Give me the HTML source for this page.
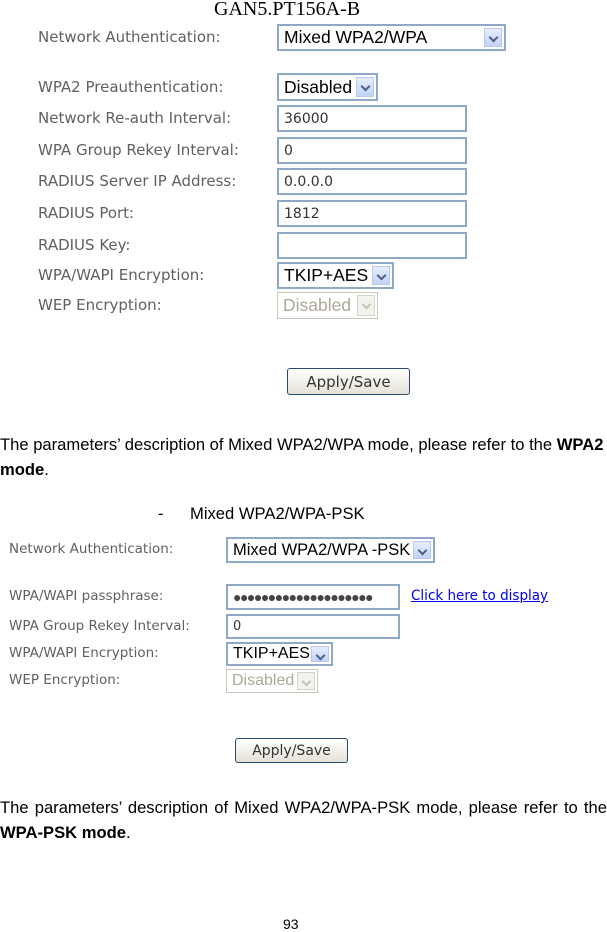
<!DOCTYPE html>
<html><head><meta charset="utf-8"><style>
body{margin:0;width:607px;height:931px;background:#fff;position:relative;overflow:hidden;font-family:"Liberation Sans",Arial,sans-serif}
.a{position:absolute;white-space:nowrap}
.l{position:absolute;white-space:nowrap;color:#606060;font-size:15px;font-family:"DejaVu Sans",sans-serif;transform-origin:0 50%}
.b{position:absolute;box-sizing:border-box;border:1px solid #7f9db9;background:#fff;font-size:17.5px;color:#000;padding-left:5px;display:flex;align-items:center;overflow:hidden}
.box2{border:2px solid #8ea8c6}
.arr{position:absolute;right:2px;top:2px;bottom:2px;width:18px;background:linear-gradient(#e6eeff,#c2d3f7);border:1px solid #b7c8ec;box-sizing:border-box}
.arr:after{content:"";position:absolute;left:5px;top:5px;width:5px;height:5px;border-right:2px solid #4d6185;border-bottom:2px solid #4d6185;transform:rotate(45deg)}
.dis{border-color:#c9c7ba;color:#aca899}
.dis .arr{background:#f3f3ee;border-color:#d6d4c8}
.dis .arr:after{border-color:#c4c2b5}
.btn{position:absolute;box-sizing:border-box;border:1px solid #2c4a6e;border-radius:3px;background:linear-gradient(#fff,#e4e1d8);color:#333;font-family:"DejaVu Sans",sans-serif;display:flex;align-items:center;justify-content:center}
.p{position:absolute;left:0;width:607px;font-size:16.6px;color:#000}
.s2{font-size:16.5px}
</style></head><body>
<div class="a" style="left:214px;top:-2px;font-family:'Liberation Serif',serif;font-size:20px">GAN5.PT156A-B</div>

<div class="l" style="left:38px;top:28px">Network Authentication:</div>
<div class="b box2" style="left:277px;top:24px;width:229px;height:27px">Mixed WPA2/WPA<div class="arr"></div></div>
<div class="l" style="left:38px;top:78px">WPA2 Preauthentication:</div>
<div class="b box2" style="left:277px;top:73px;width:101px;height:28px">Disabled<div class="arr"></div></div>
<div class="l" style="left:38px;top:109px">Network Re-auth Interval:</div>
<div class="b box2" style="left:277px;top:105px;width:190px;height:27px;font-family:'DejaVu Sans';font-size:14px;color:#333">36000</div>
<div class="l" style="left:38px;top:141px">WPA Group Rekey Interval:</div>
<div class="b box2" style="left:277px;top:137px;width:190px;height:27px;font-family:'DejaVu Sans';font-size:14px;color:#333">0</div>
<div class="l" style="left:38px;top:172px">RADIUS Server IP Address:</div>
<div class="b box2" style="left:277px;top:168px;width:190px;height:27px;font-family:'DejaVu Sans';font-size:14px;color:#333">0.0.0.0</div>
<div class="l" style="left:38px;top:204px">RADIUS Port:</div>
<div class="b box2" style="left:277px;top:200px;width:190px;height:27px;font-family:'DejaVu Sans';font-size:14px;color:#333">1812</div>
<div class="l" style="left:38px;top:236px">RADIUS Key:</div>
<div class="b box2" style="left:277px;top:232px;width:190px;height:27px"></div>
<div class="l" style="left:38px;top:266px">WPA/WAPI Encryption:</div>
<div class="b box2" style="left:277px;top:262px;width:117px;height:27px">TKIP+AES<div class="arr"></div></div>
<div class="l" style="left:38px;top:296px">WEP Encryption:</div>
<div class="b dis" style="left:277px;top:292px;width:101px;height:27px">Disabled<div class="arr"></div></div>
<div class="btn" style="left:287px;top:368px;width:123px;height:27px;font-size:15px">Apply/Save</div>

<div class="p" style="top:432px;text-align:justify;line-height:25px">The parameters’ description of Mixed WPA2/WPA mode, please refer to the <b>WPA2</b><br><b>mode</b>.</div>
<div class="a" style="left:158px;top:504px;font-size:16.6px">-</div>
<div class="a" style="left:190px;top:504px;font-size:16.6px">Mixed WPA2/WPA-PSK</div>

<div class="l" style="left:9px;top:541px;font-size:13.5px">Network Authentication:</div>
<div class="b box2 s2" style="left:226px;top:537px;width:209px;height:26px">Mixed WPA2/WPA -PSK<div class="arr"></div></div>
<div class="l" style="left:9px;top:588px;font-size:13.5px">WPA/WAPI passphrase:</div>
<div class="b box2" style="left:226px;top:584px;width:174px;height:26px;font-size:14px;color:#444;letter-spacing:-1.5px">●●●●●●●●●●●●●●●●●●●●</div>
<div class="a" style="left:411px;top:588px;font-size:14px;color:#00e;text-decoration:underline;font-family:'DejaVu Sans';transform:scaleX(0.965);transform-origin:0 0">Click here to display</div>
<div class="l" style="left:9px;top:618px;font-size:13.5px">WPA Group Rekey Interval:</div>
<div class="b box2" style="left:226px;top:614px;width:174px;height:25px;font-family:'DejaVu Sans';font-size:13px;color:#333">0</div>
<div class="l" style="left:9px;top:645px;font-size:13.5px">WPA/WAPI Encryption:</div>
<div class="b box2 s2" style="left:226px;top:642px;width:107px;height:24px;font-size:16px">TKIP+AES<div class="arr"></div></div>
<div class="l" style="left:9px;top:672px;font-size:13.5px">WEP Encryption:</div>
<div class="b dis s2" style="left:226px;top:669px;width:92px;height:24px;font-size:16px">Disabled<div class="arr"></div></div>
<div class="btn" style="left:235px;top:738px;width:113px;height:25px;font-size:14px">Apply/Save</div>

<div class="p" style="top:795px;text-align:justify;text-align-last:justify;line-height:25px;height:25px">The parameters’ description of Mixed WPA2/WPA-PSK mode, please refer to the</div>
<div class="p" style="top:820px;line-height:25px"><b>WPA-PSK mode</b>.</div>
<div class="a" style="left:283px;top:916px;font-size:14px">93</div>
</body></html>
